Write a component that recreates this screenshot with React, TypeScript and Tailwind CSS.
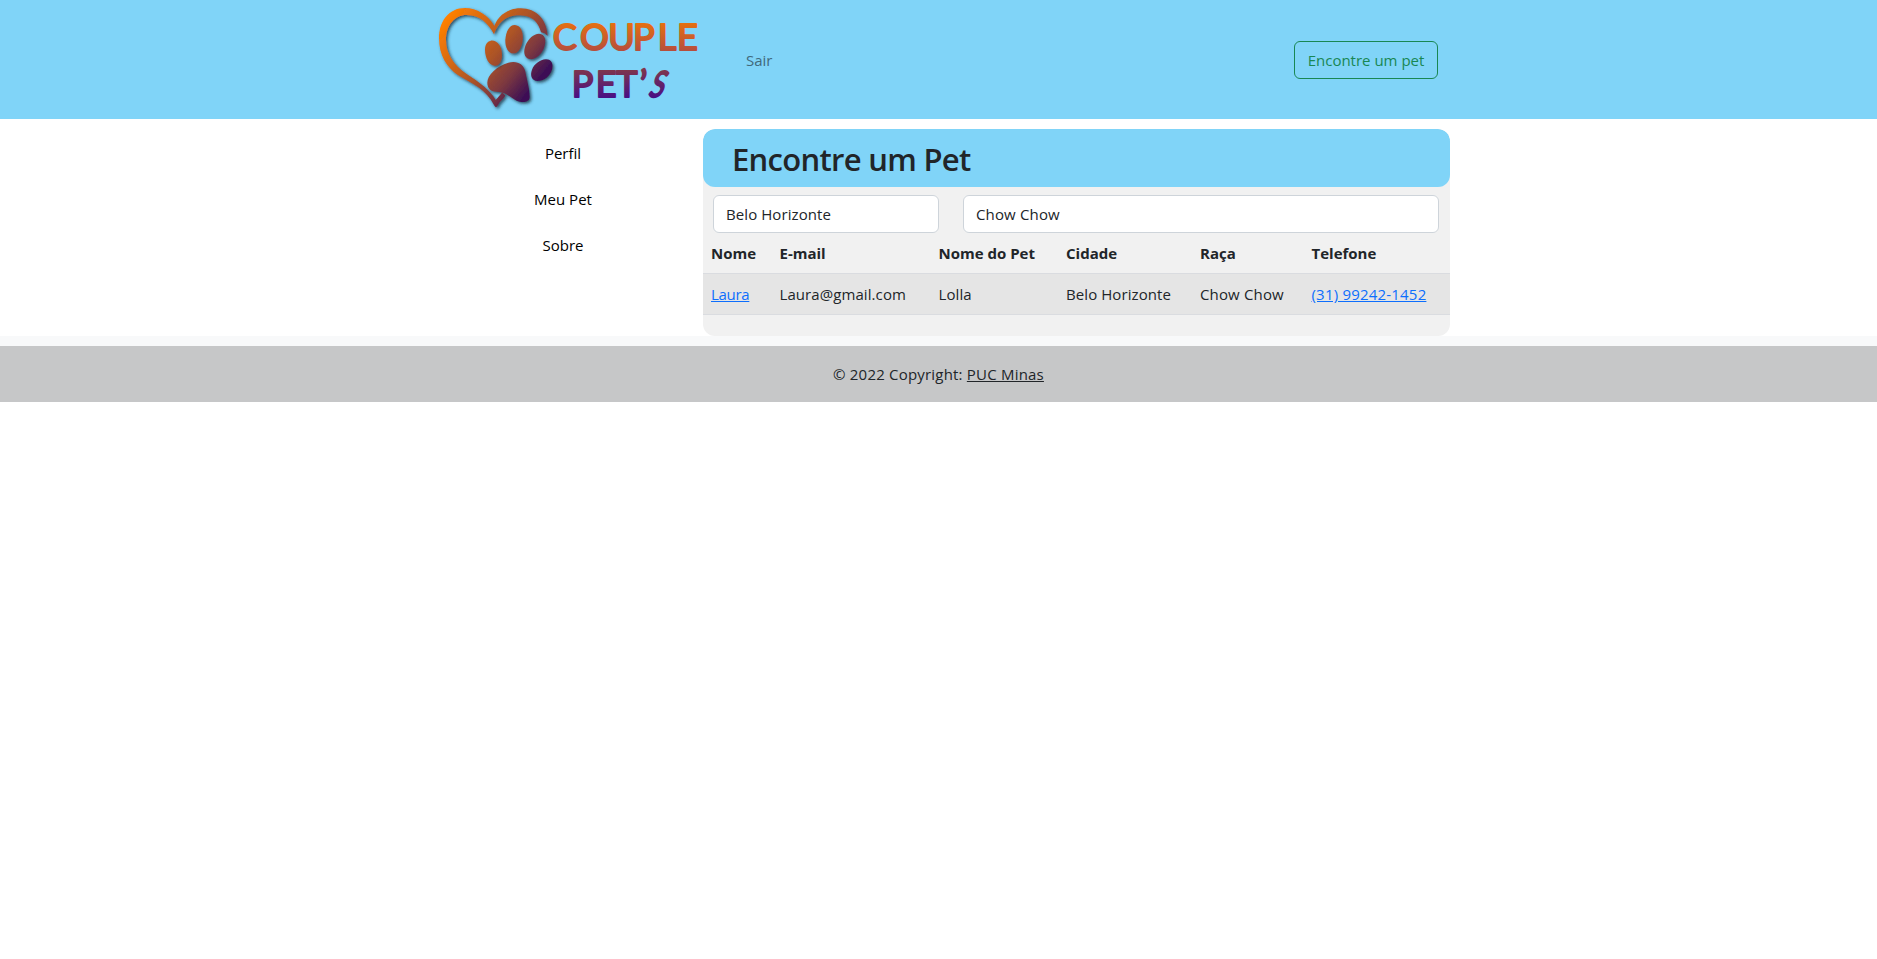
const columns = [
  { label: 'Nome', width: 'w-[68.5px]' },
  { label: 'E-mail', width: 'w-[159px]' },
  { label: 'Nome do Pet', width: 'w-[127.5px]' },
  { label: 'Cidade', width: 'w-[134px]' },
  { label: 'Raça', width: 'w-[111.5px]' },
  { label: 'Telefone', width: 'w-[146.5px]' },
];

const links = ['Perfil', 'Meu Pet', 'Sobre'];

function Logo() {
  return (
    <svg width="280" height="119" viewBox="0 0 840 357" role="img" aria-label="Couple Pet's">
      <defs>
        <linearGradient id="mark" gradientUnits="userSpaceOnUse" x1="50" y1="50" x2="330" y2="280">
          <stop offset="0" stopColor="#ff8000" />
          <stop offset="0.5" stopColor="#ad5426" />
          <stop offset="0.72" stopColor="#7c3840" />
          <stop offset="0.92" stopColor="#3c0f55" />
        </linearGradient>
        <linearGradient id="word" gradientUnits="userSpaceOnUse" x1="0" y1="68" x2="0" y2="294">
          <stop offset="0" stopColor="#e67010" />
          <stop offset="0.36" stopColor="#b84f3c" />
          <stop offset="0.64" stopColor="#7c344f" />
          <stop offset="1" stopColor="#480f85" />
        </linearGradient>
        <linearGradient id="wordEnd" gradientUnits="userSpaceOnUse" x1="0" y1="-78" x2="0" y2="3">
          <stop offset="0" stopColor="#7c344f" />
          <stop offset="1" stopColor="#480f85" />
        </linearGradient>
        <filter id="shade" x="-10%" y="-10%" width="125%" height="125%">
          <feDropShadow dx="5" dy="5" stdDeviation="4" floodColor="#12303c" floodOpacity="0.8" />
        </filter>
      </defs>
      <g fill="url(#mark)" filter="url(#shade)">
        <path d="M353 107C350 60 320 25 272 25C235 25 205 45 193 78C175 45 140 24 105 24C55 24 27 65 27 115C27 165 50 203 85 226C130 253 168 268 192 315Q198 328 204 315C208 305 218 300 226 287L217 277C210 285 205 292 197 300C180 270 150 248 110 222C70 195 48 160 48 120C48 75 75 45 110 45C150 45 175 70 192 103C205 65 230 45 270 46C305 47 325 65 333 97Q345 98 353 107Z" />
        <path d="M172 248C172 225 200 198 235 188C262 181 281 193 286 215C292 245 300 270 299 293C297 308 275 308 260 302C240 290 225 275 200 275C180 275 172 262 172 248Z" />
      </g>
      <g filter="url(#shade)">
        <g fill="url(#mark)">
          <path d="M182 122C202 119 216 140 216 164C216 184 207 197 196 197C177 198 165 173 165 150C165 135 171 124 182 122Z" />
          <path d="M255 75C271 76 280 94 278 119C276 143 264 160 250 160C234 160 225 142 226 119C228 93 239 74 255 75Z" />
          <path d="M327 101C346 102 350 121 342 144C334 165 315 180 299 177C282 174 279 155 287 135C295 116 311 101 327 101Z" />
          <path d="M347 178C364 177 371 192 366 209C360 229 341 243 323 243C306 242 299 227 306 209C313 192 330 179 347 178Z" />
        </g>
      </g>
      <g
        fill="url(#word)"
        stroke="url(#word)"
        strokeWidth="6"
        strokeLinejoin="round"
        fontFamily="Lato, sans-serif"
        fontWeight="400"
        fontSize="108"
      >
        <text y="149" x="368 450 535 609 683 741">COUPLE</text>
        <text y="291" x="425 497 559 629">PET’</text>
        <text
          transform="translate(652 291) skewX(-20) scale(0.74 1)"
          fill="url(#wordEnd)"
          stroke="url(#wordEnd)"
        >
          S
        </text>
      </g>
    </svg>
  );
}

export default function App() {
  return (
    <div className="min-h-[959px] bg-white font-['Open_Sans','Noto_Sans',sans-serif] text-[15px] leading-6 text-[#212529]">
      <header className="flex h-[119px] items-center bg-[#80d4f8] pl-[430px] pr-[439px]">
        <Logo />
        <a className="ml-[36px] text-[#406a7c]">Sair</a>
        <button className="ml-auto mt-[1px] h-[38px] w-[144px] whitespace-nowrap rounded-md border border-[#198754] text-[#198754]">
          Encontre um pet
        </button>
      </header>
      <main className="flex h-[217px] pl-[423px] pr-[427px] pt-[10px]">
        <nav className="flex w-[280px] flex-col items-center gap-[22px] pt-3 text-black">
          {links.map((l) => (
            <a key={l}>{l}</a>
          ))}
        </nav>
        <section className="h-[207px] w-[747px] overflow-hidden rounded-xl bg-[#f1f1f1]">
          <h1 className="h-[58px] rounded-xl bg-[#80d4f8] pl-[29px] pt-[11px] text-[31px] font-semibold leading-[38px] tracking-[-0.7px]">
            Encontre um Pet
          </h1>
          <div className="flex gap-6 px-[10px] pt-2">
            <div className="h-[38px] w-[226px] rounded-md border border-[#ced4da] bg-white px-3 py-[6px] tracking-[0.08px]">
              Belo Horizonte
            </div>
            <div className="h-[38px] w-[476px] rounded-md border border-[#ced4da] bg-white px-3 py-[6px] tracking-[0.15px]">
              Chow Chow
            </div>
          </div>
          <table className="w-full table-fixed border-separate border-spacing-0 whitespace-nowrap text-left">
            <thead>
              <tr>
                {columns.map((c) => (
                  <th key={c.label} className={`${c.width} h-[41px] border-b border-[#dadce0] px-2 py-0 font-bold`}>
                    {c.label}
                  </th>
                ))}
              </tr>
            </thead>
            <tbody className="[&_td]:h-[41px] [&_td]:border-b [&_td]:border-[#dadce0] [&_td]:px-2 [&_td]:py-0">
              <tr className="bg-[#e5e5e5] tracking-[0.08px]">
                <td className="tracking-[-0.3px]"><a className="text-[#0d6efd] underline">Laura</a></td>
                <td>Laura@gmail.com</td>
                <td>Lolla</td>
                <td>Belo Horizonte</td>
                <td className="tracking-[0.15px]">Chow Chow</td>
                <td className="tracking-[0.2px]"><a className="text-[#0d6efd] underline">(31) 99242-1452</a></td>
              </tr>
            </tbody>
          </table>
        </section>
      </main>
      <footer className="bg-[#f8f9fa] pt-[10px]">
        <div className="h-14 bg-[#c6c7c8] py-4 text-center tracking-[0.2px]">
          © 2022 Copyright: <a className="underline">PUC Minas</a>
        </div>
      </footer>
    </div>
  );
}
